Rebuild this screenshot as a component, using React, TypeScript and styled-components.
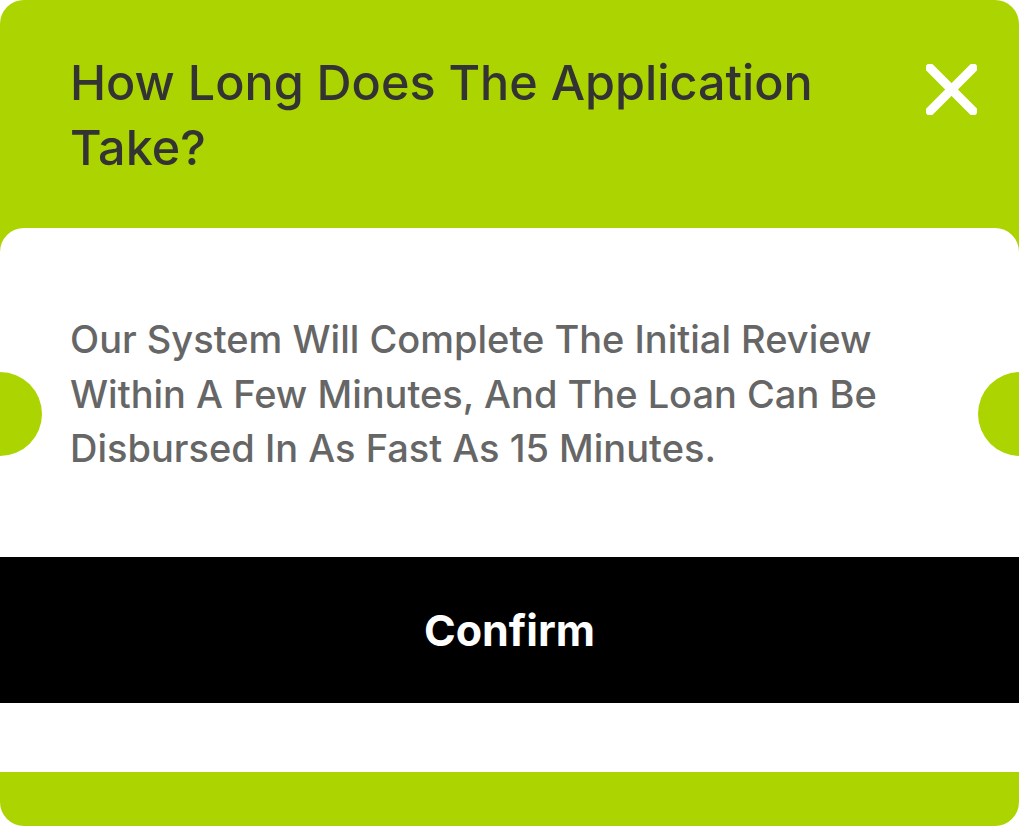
import React from "react";
import styled, { createGlobalStyle } from "styled-components";

const GlobalStyle = createGlobalStyle`
    html, body {
        margin: 0;
        padding: 0;
        background: #ffffff;
    }
    * {
        box-sizing: border-box;
    }
`;

const GREEN = "#acd400";

const Sheet = styled.div`
    position: relative;
    width: 1019px;
    height: 826px;
    background: ${GREEN};
    border-radius: 24px;
    overflow: hidden;
    display: flex;
    flex-direction: column;
    font-family: Inter, "Noto Sans", sans-serif;
`;

const Header = styled.div`
    height: 228px;
    display: flex;
    justify-content: space-between;
    align-items: flex-start;
    padding: 50px 42px 0 70px;
`;

const Title = styled.h2`
    margin: 0;
    max-width: 810px;
    font-size: 48.5px;
    font-weight: 500;
    line-height: 65px;
    color: #333333;
`;

const CloseButton = styled.button`
    border: none;
    background: none;
    padding: 0;
    margin-top: 14px;
    width: 51px;
    height: 51px;
    cursor: pointer;
    svg {
        display: block;
    }
`;

const Card = styled.div`
    flex: 1;
    margin-bottom: 54px;
    background: #ffffff;
    border-radius: 24px 24px 0 0;
    display: flex;
    flex-direction: column;
`;

const Message = styled.p`
    margin: 0;
    padding: 84px 70px 0;
    font-size: 38px;
    font-weight: 500;
    line-height: 54.5px;
    color: #666666;
`;

const ConfirmButton = styled.button`
    margin-top: auto;
    margin-bottom: 69px;
    height: 146px;
    width: 100%;
    border: none;
    background: #000000;
    color: #ffffff;
    font-family: inherit;
    font-size: 43px;
    font-weight: 700;
    cursor: pointer;
`;

const Notch = styled.span<{ $side: "left" | "right" }>`
    position: absolute;
    top: 372px;
    ${(p) => (p.$side === "left" ? "left: -42px;" : "right: -43px;")}
    width: 84px;
    height: 84px;
    border-radius: 50%;
    background: ${GREEN};
`;

export default function App() {
    return (
        <>
            <GlobalStyle />
            <Sheet>
                <Header>
                    <Title>How Long Does The Application Take?</Title>
                    <CloseButton aria-label="close">
                        <svg width="51" height="51" viewBox="0 0 51 51">
                            <path
                                d="M4 4 L47 47 M47 4 L4 47"
                                stroke="#ffffff"
                                strokeWidth="9"
                                strokeLinecap="square"
                            />
                        </svg>
                    </CloseButton>
                </Header>
                <Card>
                    <Message>
                        Our System Will Complete The Initial Review Within A Few
                        Minutes, And The Loan Can Be Disbursed In As Fast As 15
                        Minutes.
                    </Message>
                    <ConfirmButton>Confirm</ConfirmButton>
                </Card>
                <Notch $side="left" />
                <Notch $side="right" />
            </Sheet>
        </>
    );
}
